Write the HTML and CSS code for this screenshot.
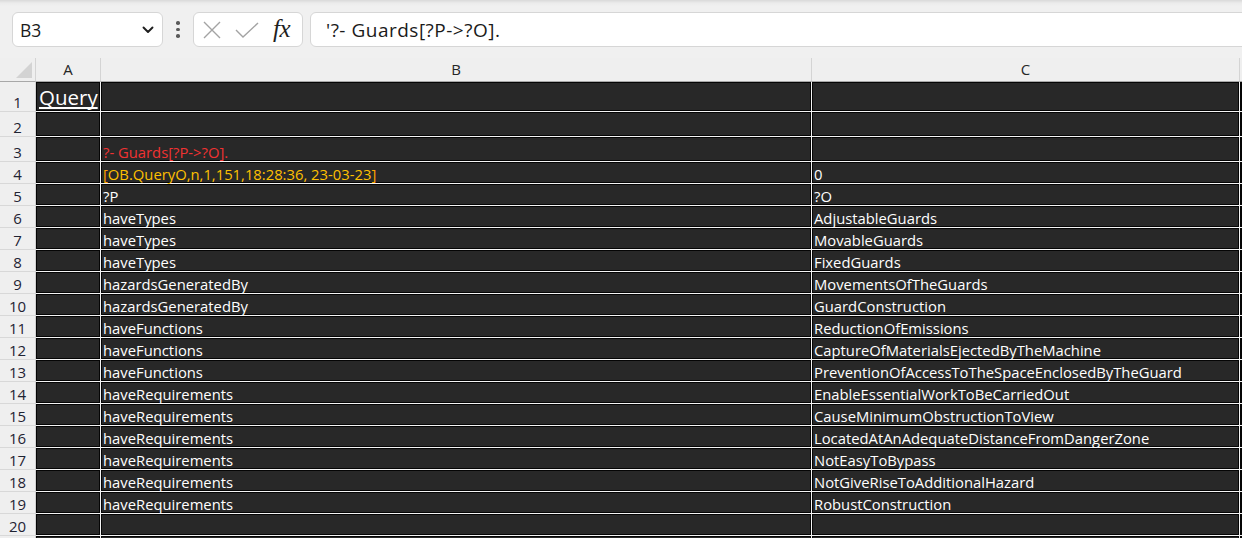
FILE: index.html
```html
<!DOCTYPE html>
<html>
<head>
<meta charset="utf-8">
<link rel="stylesheet" href="styles.css">
</head>
<body>
<div class="toolbar">
  <div class="namebox">
    <span class="nametext">B3</span>
    <svg class="chevron" width="12" height="8" viewBox="0 0 12 8"><path d="M1.5 1.5 L6 6 L10.5 1.5" fill="none" stroke="#1e1e1e" stroke-width="1.9" stroke-linecap="round" stroke-linejoin="round"/></svg>
  </div>
  <div class="dots"><i></i><i></i><i></i></div>
  <div class="fxbox">
    <svg class="icon-x" width="20" height="20" viewBox="0 0 20 20"><path d="M2 2 L18 18 M18 2 L2 18" stroke="#a3a3a3" stroke-width="1.4" fill="none"/></svg>
    <svg class="icon-check" width="24" height="16" viewBox="0 0 24 16"><path d="M1 8 L8 15 L23 1" stroke="#a3a3a3" stroke-width="1.4" fill="none"/></svg>
    <span class="fx">fx</span>
  </div>
  <div class="formula">'?- Guards[?P-&gt;?O].</div>
</div>

<div class="sheet">
  <div class="corner"><span class="tri"></span></div>
  <div class="colhead">A</div>
  <div class="colhead">B</div>
  <div class="colhead">C</div>
  <div class="colhead last"></div>

  <div class="rowhead">1</div>
  <div class="cell"><span class="title">Query</span></div>
  <div class="cell"></div>
  <div class="cell"></div>
  <div class="cell"></div>

  <div class="rowhead">2</div>
  <div class="cell"></div><div class="cell"></div><div class="cell"></div><div class="cell"></div>

  <div class="rowhead">3</div>
  <div class="cell"></div>
  <div class="cell"><span class="red">?- Guards[?P-&gt;?O].</span></div>
  <div class="cell"></div><div class="cell"></div>

  <div class="rowhead">4</div>
  <div class="cell"></div>
  <div class="cell"><span class="orange">[</span><span class="gold">OB.QueryO,n,1,151,18:28:36, 23-03-23</span><span class="orange">]</span></div>
  <div class="cell"><span>0</span></div>
  <div class="cell"></div>

  <div class="rowhead">5</div>
  <div class="cell"></div><div class="cell"><span>?P</span></div><div class="cell"><span>?O</span></div><div class="cell"></div>

  <div class="rowhead">6</div>
  <div class="cell"></div><div class="cell"><span>haveTypes</span></div><div class="cell"><span>AdjustableGuards</span></div><div class="cell"></div>

  <div class="rowhead">7</div>
  <div class="cell"></div><div class="cell"><span>haveTypes</span></div><div class="cell"><span>MovableGuards</span></div><div class="cell"></div>

  <div class="rowhead">8</div>
  <div class="cell"></div><div class="cell"><span>haveTypes</span></div><div class="cell"><span>FixedGuards</span></div><div class="cell"></div>

  <div class="rowhead">9</div>
  <div class="cell"></div><div class="cell"><span>hazardsGeneratedBy</span></div><div class="cell"><span>MovementsOfTheGuards</span></div><div class="cell"></div>

  <div class="rowhead">10</div>
  <div class="cell"></div><div class="cell"><span>hazardsGeneratedBy</span></div><div class="cell"><span>GuardConstruction</span></div><div class="cell"></div>

  <div class="rowhead">11</div>
  <div class="cell"></div><div class="cell"><span>haveFunctions</span></div><div class="cell"><span>ReductionOfEmissions</span></div><div class="cell"></div>

  <div class="rowhead">12</div>
  <div class="cell"></div><div class="cell"><span>haveFunctions</span></div><div class="cell"><span>CaptureOfMaterialsEjectedByTheMachine</span></div><div class="cell"></div>

  <div class="rowhead">13</div>
  <div class="cell"></div><div class="cell"><span>haveFunctions</span></div><div class="cell"><span>PreventionOfAccessToTheSpaceEnclosedByTheGuard</span></div><div class="cell"></div>

  <div class="rowhead">14</div>
  <div class="cell"></div><div class="cell"><span>haveRequirements</span></div><div class="cell"><span>EnableEssentialWorkToBeCarriedOut</span></div><div class="cell"></div>

  <div class="rowhead">15</div>
  <div class="cell"></div><div class="cell"><span>haveRequirements</span></div><div class="cell"><span>CauseMinimumObstructionToView</span></div><div class="cell"></div>

  <div class="rowhead">16</div>
  <div class="cell"></div><div class="cell"><span>haveRequirements</span></div><div class="cell"><span>LocatedAtAnAdequateDistanceFromDangerZone</span></div><div class="cell"></div>

  <div class="rowhead">17</div>
  <div class="cell"></div><div class="cell"><span>haveRequirements</span></div><div class="cell"><span>NotEasyToBypass</span></div><div class="cell"></div>

  <div class="rowhead">18</div>
  <div class="cell"></div><div class="cell"><span>haveRequirements</span></div><div class="cell"><span>NotGiveRiseToAdditionalHazard</span></div><div class="cell"></div>

  <div class="rowhead">19</div>
  <div class="cell"></div><div class="cell"><span>haveRequirements</span></div><div class="cell"><span>RobustConstruction</span></div><div class="cell"></div>

  <div class="rowhead">20</div>
  <div class="cell"></div><div class="cell"></div><div class="cell"></div><div class="cell"></div>

  <div class="rowhead"></div>
  <div class="cell"></div><div class="cell"></div><div class="cell"></div><div class="cell"></div>
</div>
</body>
</html>
```

FILE: styles.css
```css
html, body {
  margin: 0;
  padding: 0;
  width: 1242px;
  height: 538px;
  overflow: hidden;
  background: #f0f0f0;
  font-family: "Open Sans", "Noto Sans", sans-serif;
}

.toolbar {
  height: 58px;
  box-sizing: border-box;
  display: flex;
  align-items: flex-start;
  padding: 12px 0 0 12px;
  background: linear-gradient(#d9d9d9 0px, #ebebeb 3px, #f0f0f0 6px);
}

.namebox {
  width: 151px;
  height: 35px;
  box-sizing: border-box;
  background: #fff;
  border: 1px solid #d6d6d6;
  border-radius: 6px;
  display: flex;
  align-items: center;
  justify-content: space-between;
  padding: 0 8px 0 7px;
}

.nametext {
  font-size: 17.5px;
  color: #1b1b1b;
}

.chevron {
  display: block;
}

.dots {
  width: 4px;
  height: 35px;
  margin: 0 13px 0 13px;
  display: flex;
  flex-direction: column;
  justify-content: center;
  align-items: center;
  gap: 3px;
}

.dots i {
  display: block;
  width: 3.5px;
  height: 3.5px;
  border-radius: 50%;
  background: #5a5a5a;
}

.fxbox {
  width: 110px;
  height: 35px;
  box-sizing: border-box;
  background: #fff;
  border: 1px solid #d6d6d6;
  border-radius: 6px;
  display: flex;
  align-items: center;
  padding-left: 8px;
}

.icon-x {
  display: block;
}

.icon-check {
  display: block;
  margin-left: 13px;
  margin-top: 1px;
}

.fx {
  font-family: "Liberation Serif", "DejaVu Serif", serif;
  font-style: italic;
  font-size: 25px;
  line-height: 25px;
  color: #1f1f1f;
  margin-left: 14px;
  margin-top: -3px;
  letter-spacing: -0.5px;
}

.formula {
  flex: 1;
  height: 35px;
  box-sizing: border-box;
  margin-left: 7px;
  margin-right: -20px;
  background: #fff;
  border: 1px solid #d6d6d6;
  border-radius: 6px;
  display: flex;
  align-items: center;
  padding-left: 15px;
  font-size: 19px;
  letter-spacing: 0.5px;
  color: #1a1a1a;
}

.sheet {
  display: grid;
  grid-template-columns: 36px 65px 711px 428px 2px;
  grid-template-rows: 24px 30px 25px 25px repeat(18, 22px);
}

.corner {
  position: relative;
  background: #efefef;
  border-bottom: 1px solid #a8a8a8;
  border-right: 1px solid #d4d4d4;
}

.tri {
  position: absolute;
  right: 3px;
  bottom: 3px;
  width: 0;
  height: 0;
  border-style: solid;
  border-width: 0 0 16px 16px;
  border-color: transparent transparent #d3d3d3 transparent;
}

.colhead {
  background: #efefef;
  border-bottom: 1px solid #a8a8a8;
  border-right: 1px solid #d4d4d4;
  display: flex;
  align-items: center;
  justify-content: center;
  font-size: 15px;
  color: #262626;
  padding-bottom: 1px;
}

.colhead.last {
  border-right: none;
}

.rowhead {
  background: #efefef;
  border-bottom: 1px solid #d8d8d8;
  border-right: 1px solid #d0d0d0;
  display: flex;
  align-items: flex-end;
  justify-content: center;
  font-size: 15px;
  line-height: 18px;
  color: #1f2333;
  padding-bottom: 0px;
}

.cell {
  background: #282828;
  box-shadow: inset 0 0 0 1px #050505;
  border-right: 1px solid #f4f4f4;
  border-bottom: 1px solid #f4f4f4;
  display: flex;
  align-items: flex-end;
  padding-left: 2px;
  padding-bottom: 1px;
  font-size: 14.8px;
  line-height: 16px;
  color: #ffffff;
  white-space: nowrap;
  overflow: visible;
}

.title {
  font-size: 20.5px;
  line-height: 22px;
  text-decoration: underline;
  text-decoration-skip-ink: none;
  text-underline-offset: 2px;
  text-decoration-thickness: 1.5px;
  padding-left: 1px;
  padding-bottom: 2px;
}

.red {
  color: #f03232;
}

.gold {
  color: #ffc000;
}

.orange {
  color: #ffa200;
}
```
